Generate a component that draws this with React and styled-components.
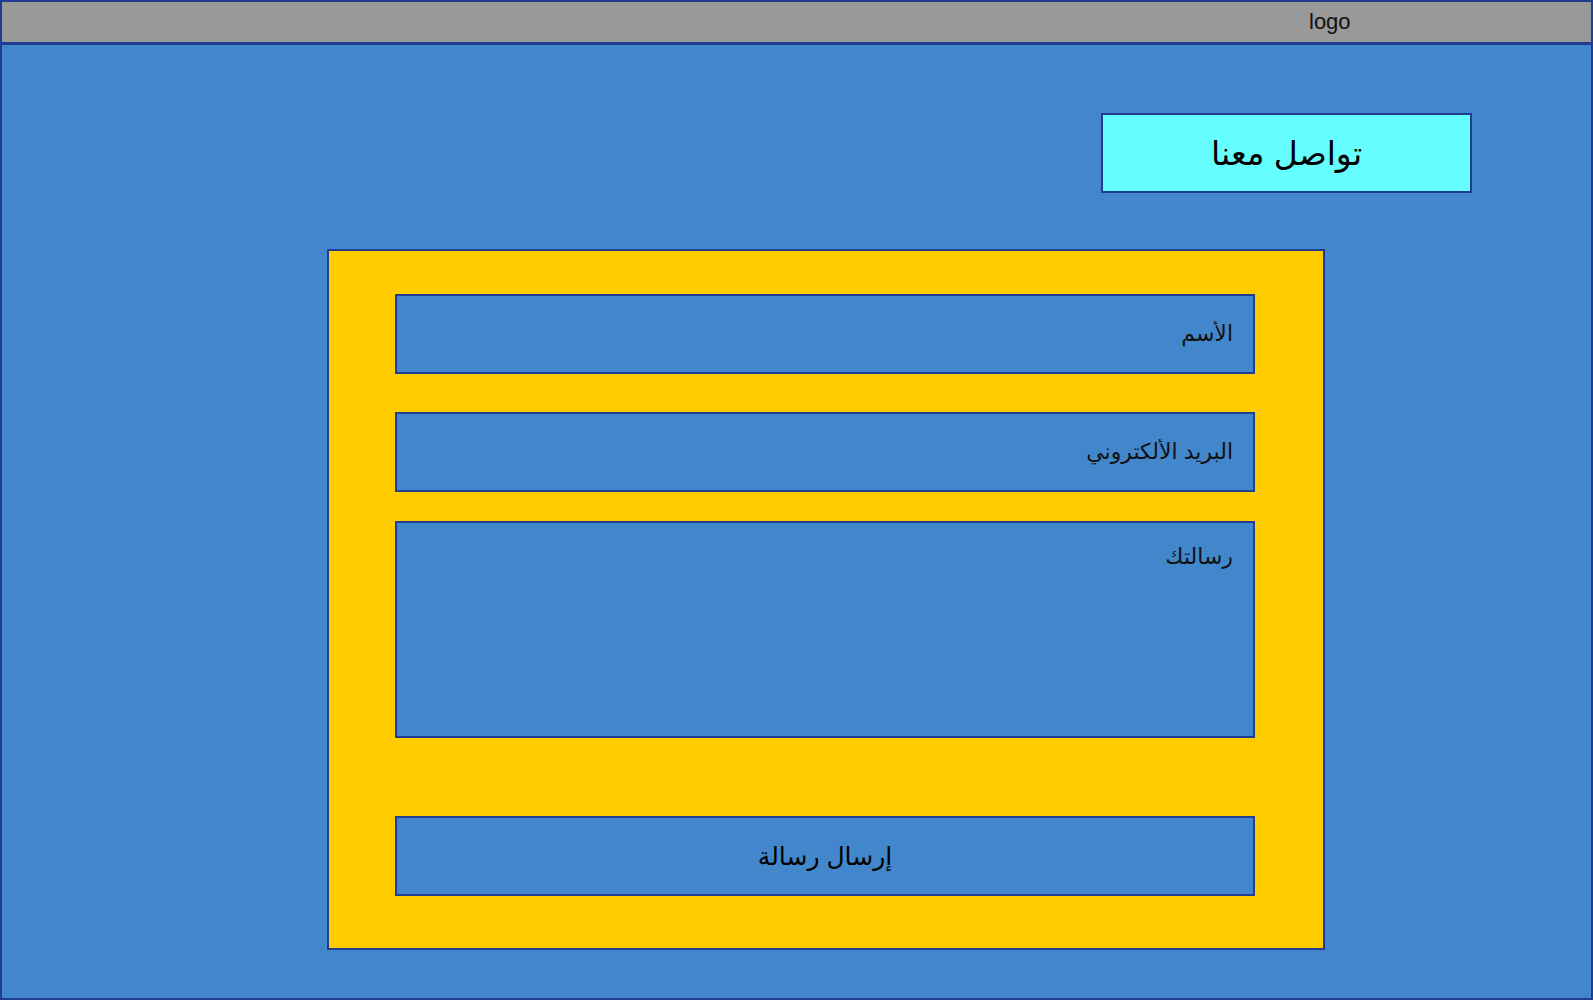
import React from "react";
import styled, { createGlobalStyle } from "styled-components";

const Global = createGlobalStyle`
  * { box-sizing: border-box; }
  html, body { margin: 0; padding: 0; }
  body { font-family: "Liberation Sans", "DejaVu Sans", Arial, sans-serif; background: #4287cc; }
`;

const Page = styled.div`
  width: 1593px;
  height: 1000px;
  display: flex;
  flex-direction: column;
`;

const Header = styled.header`
  height: 44px;
  background: #999999;
  border: 2px solid #213d92;
  display: flex;
  align-items: center;
  padding-left: 1307px;
  font-size: 22px;
  color: #111;
`;

const Main = styled.main`
  flex: 1;
  margin-top: -1px;
  background: #4287cc;
  border: 2px solid #213d92;
  display: flex;
  flex-direction: column;
  padding-top: 68px;
`;

const TitleBox = styled.h1`
  margin: 0 0 56px 1099px;
  width: 371px;
  height: 80px;
  background: #66ffff;
  border: 2px solid #213d92;
  display: flex;
  align-items: center;
  justify-content: center;
  font-size: 33px;
  font-weight: normal;
  color: #000;
`;

const Panel = styled.form`
  margin-left: 325px;
  width: 998px;
  height: 701px;
  background: #ffcc00;
  border: 2px solid #213d92;
  padding: 43px 0 0 66px;
  display: flex;
  flex-direction: column;
`;

const fieldBase = `
  width: 860px;
  background: #4287cc;
  border: 2px solid #213d92;
  font-family: "Liberation Sans", "DejaVu Sans", Arial, sans-serif;
  color: #000;
  outline: none;
  direction: rtl;
  flex-shrink: 0;
`;

const Input = styled.input`
  ${fieldBase}
  height: 80px;
  padding: 0 20px;
  font-size: 22px;
  margin-bottom: ${(p) => p.$gap}px;
  &::placeholder { color: #111; opacity: 1; }
`;

const TextArea = styled.textarea`
  ${fieldBase}
  height: 217px;
  padding: 21px 20px;
  font-size: 22px;
  resize: none;
  margin-bottom: 78px;
  &::placeholder { color: #111; opacity: 1; }
`;

const SendButton = styled.button`
  ${fieldBase}
  height: 80px;
  font-size: 25px;
  direction: rtl;
  cursor: pointer;
`;

export default function App() {
  return (
    <>
      <Global />
      <Page>
        <Header>logo</Header>
        <Main>
          <TitleBox>تواصل معنا</TitleBox>
          <Panel onSubmit={(e) => e.preventDefault()}>
            <Input $gap={38} placeholder="الأسم" />
            <Input $gap={29} placeholder="البريد الألكتروني" />
            <TextArea placeholder="رسالتك" />
            <SendButton type="submit">إرسال رسالة</SendButton>
          </Panel>
        </Main>
      </Page>
    </>
  );
}
